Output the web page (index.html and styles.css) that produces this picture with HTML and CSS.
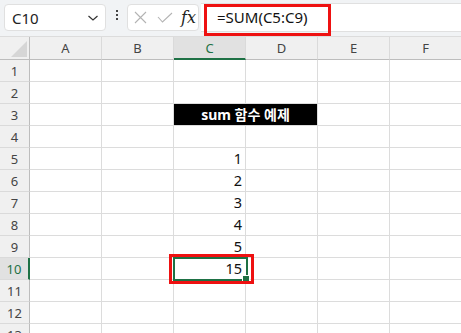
FILE: index.html
```html
<!DOCTYPE html>
<html lang="ko">
<head>
    <meta charset="UTF-8">
    <title>SUM 함수 예제</title>
    <link rel="stylesheet" href="styles.css">
</head>
<body>
    <div class="toolbar">
        <div class="nameBox">
            <span>C10</span>
            <svg class="chevron" width="12" height="8" viewBox="0 0 12 8"><path d="M1.5 2 L6 6 L10.5 2" fill="none" stroke="#333" stroke-width="1.2"/></svg>
        </div>
        <div class="dots">
            <i></i><i></i><i></i>
        </div>
        <div class="fxBox">
            <svg width="13" height="13" viewBox="0 0 13 13"><path d="M1 1 L12 12 M12 1 L1 12" stroke="#b3b3b3" stroke-width="1.1" fill="none"/></svg>
            <svg width="16" height="11" viewBox="0 0 16 11"><path d="M1 5 L5.5 10 L15 1" stroke="#b3b3b3" stroke-width="1.1" fill="none"/></svg>
            <span class="fx">fx</span>
        </div>
        <div class="formula">=SUM(C5:C9)</div>
    </div>

    <div class="sheet">
        <div class="corner"><svg width="16" height="16" viewBox="0 0 16 16"><path d="M16 0 L16 16 L0 16 Z" fill="#d6d6d6"/></svg></div>
        <div class="colHead">A</div>
        <div class="colHead">B</div>
        <div class="colHead active">C</div>
        <div class="colHead">D</div>
        <div class="colHead">E</div>
        <div class="colHead">F</div>

        <div class="rowHead">1</div><div class="cell"></div><div class="cell"></div><div class="cell"></div><div class="cell"></div><div class="cell"></div><div class="cell"></div>
        <div class="rowHead">2</div><div class="cell"></div><div class="cell"></div><div class="cell"></div><div class="cell"></div><div class="cell"></div><div class="cell"></div>
        <div class="rowHead">3</div><div class="cell"></div><div class="cell"></div><div class="cell title">sum 함수 예제</div><div class="cell"></div><div class="cell"></div>
        <div class="rowHead">4</div><div class="cell"></div><div class="cell"></div><div class="cell"></div><div class="cell"></div><div class="cell"></div><div class="cell"></div>
        <div class="rowHead">5</div><div class="cell"></div><div class="cell"></div><div class="cell num">1</div><div class="cell"></div><div class="cell"></div><div class="cell"></div>
        <div class="rowHead">6</div><div class="cell"></div><div class="cell"></div><div class="cell num">2</div><div class="cell"></div><div class="cell"></div><div class="cell"></div>
        <div class="rowHead">7</div><div class="cell"></div><div class="cell"></div><div class="cell num">3</div><div class="cell"></div><div class="cell"></div><div class="cell"></div>
        <div class="rowHead">8</div><div class="cell"></div><div class="cell"></div><div class="cell num">4</div><div class="cell"></div><div class="cell"></div><div class="cell"></div>
        <div class="rowHead">9</div><div class="cell"></div><div class="cell"></div><div class="cell num">5</div><div class="cell"></div><div class="cell"></div><div class="cell"></div>
        <div class="rowHead active">10</div><div class="cell"></div><div class="cell"></div><div class="cell num selected">15<span class="handle"></span><span class="mark"></span></div><div class="cell"></div><div class="cell"></div><div class="cell"></div>
        <div class="rowHead">11</div><div class="cell"></div><div class="cell"></div><div class="cell"></div><div class="cell"></div><div class="cell"></div><div class="cell"></div>
        <div class="rowHead">12</div><div class="cell"></div><div class="cell"></div><div class="cell"></div><div class="cell"></div><div class="cell"></div><div class="cell"></div>
        <div class="rowHead">13</div><div class="cell"></div><div class="cell"></div><div class="cell"></div><div class="cell"></div><div class="cell"></div><div class="cell"></div>
    </div>
</body>
</html>
```

FILE: styles.css
```css
body {
    margin: 0;
    width: 461px;
    height: 333px;
    overflow: hidden;
    font-family: "Noto Sans", "Noto Sans CJK KR", sans-serif;
    background: #ffffff;
}

.toolbar {
    height: 37px;
    background: #f1f3f5;
    display: flex;
    align-items: flex-start;
    border-bottom: 1px solid #dcdcdc;
    box-sizing: border-box;
}

.nameBox {
    margin: 4px 0 0 4px;
    width: 102px;
    height: 27px;
    box-sizing: border-box;
    background: #fff;
    border: 1px solid #e0e0e0;
    border-radius: 4px;
    display: flex;
    align-items: center;
    justify-content: space-between;
    padding: 0 6px 0 7px;
    font-size: 15px;
    color: #222;
}

.dots {
    width: 21px;
    height: 30px;
    display: flex;
    flex-direction: column;
    align-items: center;
    justify-content: center;
    gap: 2px;
}
.dots i {
    width: 2px;
    height: 2px;
    background: #444;
}

.fxBox {
    margin-top: 4px;
    width: 72px;
    height: 27px;
    box-sizing: border-box;
    background: #fff;
    border: 1px solid #e0e0e0;
    border-radius: 4px;
    display: flex;
    align-items: center;
    gap: 10px;
    padding-left: 6px;
}
.fx {
    font-family: "DejaVu Serif", "Liberation Serif", serif;
    font-style: italic;
    font-size: 16px;
    color: #222;
    margin-left: -2px;
}

.formula {
    flex: 1;
    margin: 3px 0 0 2px;
    height: 29px;
    box-sizing: border-box;
    background: #fff;
    border-top: 1px solid #e0e0e0;
    border-bottom: 1px solid #e0e0e0;
    padding: 3px 0 0 16px;
    font-size: 15px;
    color: #111;
    position: relative;
}
.formula::after {
    content: "";
    position: absolute;
    left: 3px;
    top: 0;
    width: 127px;
    height: 32px;
    border: 3px solid #ee1111;
    box-sizing: border-box;
}

.sheet {
    display: grid;
    grid-template-columns: 30px repeat(6, 72px);
    grid-template-rows: 23px repeat(13, 22px);
    font-size: 14px;
}

.corner, .colHead, .rowHead {
    background: #f0f0f0;
    color: #444;
    font-size: 13px;
    display: flex;
    align-items: center;
    justify-content: center;
    box-sizing: border-box;
}
.corner {
    border-right: 1px solid #bdbdbd;
    border-bottom: 1px solid #bdbdbd;
    align-items: flex-end;
    justify-content: flex-end;
    padding: 0 2px 2px 0;
}
.colHead {
    border-right: 1px solid #dadada;
    border-bottom: 1px solid #bdbdbd;
}
.colHead.active {
    background: #e1e1e1;
    color: #1e7145;
    border-bottom: 2px solid #1e7145;
}
.rowHead {
    border-right: 1px solid #bdbdbd;
    border-bottom: 1px solid #dadada;
}
.rowHead.active {
    background: #e1e1e1;
    color: #1e7145;
    border-right: 2px solid #1e7145;
}

.cell {
    border-right: 1px solid #dcdcdc;
    border-bottom: 1px solid #dcdcdc;
    box-sizing: border-box;
    color: #111;
}
.num {
    text-align: right;
    padding-right: 3px;
    line-height: 21px;
    font-size: 14.5px;
}
.title {
    grid-column: span 2;
    background: #000;
    color: #fff;
    font-weight: bold;
    font-size: 14px;
    text-align: center;
    line-height: 21px;
}

.selected {
    position: relative;
    border: 2px solid #1e7145;
    margin: -1px -2px -1px -1px;
    line-height: 19px;
    padding-right: 4px;
}
.handle {
    position: absolute;
    right: -4px;
    bottom: -4px;
    width: 6px;
    height: 6px;
    background: #1e7145;
    border: 1px solid #fff;
}
.mark {
    position: absolute;
    left: -6px;
    top: -5px;
    right: -8px;
    bottom: -5px;
    border: 3px solid #ee1111;
}
```
